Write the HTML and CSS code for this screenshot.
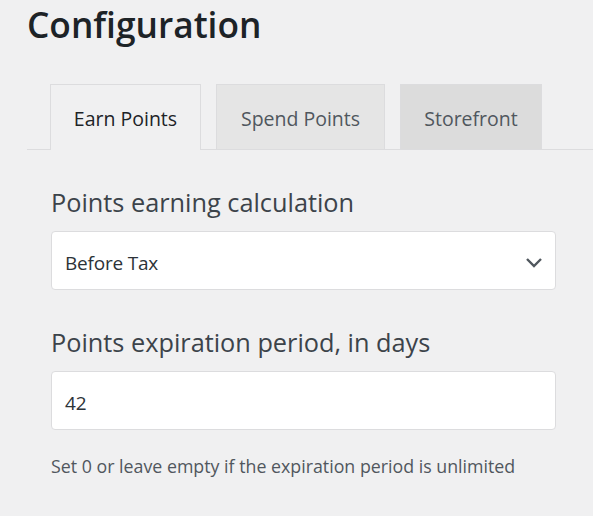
FILE: index.html
```html
<!DOCTYPE html>
<html lang="en">
<head>
<meta charset="utf-8">
<title>Configuration</title>
<link rel="stylesheet" href="styles.css">
</head>
<body>
<div class="page">
  <h1 class="title">Configuration</h1>
  <nav class="tabs">
    <a class="tab tab-active">Earn Points</a>
    <a class="tab tab-spend">Spend Points</a>
    <a class="tab tab-store">Storefront</a>
  </nav>
  <div class="form">
    <div class="field">
      <label class="label">Points earning calculation</label>
      <div class="select">
        <span class="select-value">Before Tax</span>
        <svg class="chevron" width="18" height="11" viewBox="0 0 18 11"><path d="M2 2l7 7 7-7" fill="none" stroke="#50575e" stroke-width="2.4"/></svg>
      </div>
    </div>
    <div class="field">
      <label class="label">Points expiration period, in days</label>
      <div class="input">42</div>
      <p class="help">Set 0 or leave empty if the expiration period is unlimited</p>
    </div>
  </div>
</div>
</body>
</html>
```
FILE: styles.css
```css
html, body {
  margin: 0;
  padding: 0;
  background: #f0f0f1;
}
body {
  font-family: "Open Sans", "Noto Sans", sans-serif;
  color: #1d2327;
}
.page {
  padding: 0 0 0 27px;
}
.title {
  margin: 0;
  font-size: 35.3px;
  line-height: 48px;
  font-weight: 600;
  color: #1d2327;
}
.tabs {
  display: flex;
  gap: 15px;
  margin-top: 36px;
  padding-left: 23px;
  border-bottom: 1px solid #dcdcde;
  height: 65px;
}
.tab {
  display: flex;
  align-items: center;
  justify-content: center;
  box-sizing: border-box;
  height: 66px;
  border: 1px solid #dcdcde;
  border-bottom: none;
  font-size: 19.5px;
  padding-top: 2px;
  color: #50575e;
}
.tab-active {
  width: 151px;
  background: #f0f0f1;
  color: #1d2327;
}
.tab-spend {
  width: 169px;
  background: #e5e5e5;
  height: 65px;
}
.tab-store {
  width: 142px;
  background: #dcdcdc;
  height: 65px;
}
.form {
  padding: 0 37px 0 24px;
}
.field {
  display: flex;
  flex-direction: column;
}
.label {
  display: block;
  margin-top: 34px;
  font-size: 25.3px;
  line-height: 36px;
  font-weight: 500;
  color: #3c434a;
}
.select, .input {
  box-sizing: border-box;
  margin-top: 11px;
  height: 59px;
  background: #fff;
  border: 1px solid #dcdcde;
  border-radius: 4px;
  display: flex;
  align-items: center;
  padding: 4px 12px 0 13px;
  font-size: 19px;
  color: #2c3338;
  letter-spacing: -0.2px;
}
.select-value {
  flex: 1;
}
.chevron {
  display: block;
}
.help {
  margin: 24px 0 0;
  font-size: 17.8px;
  line-height: 24px;
  color: #50575e;
}
```
